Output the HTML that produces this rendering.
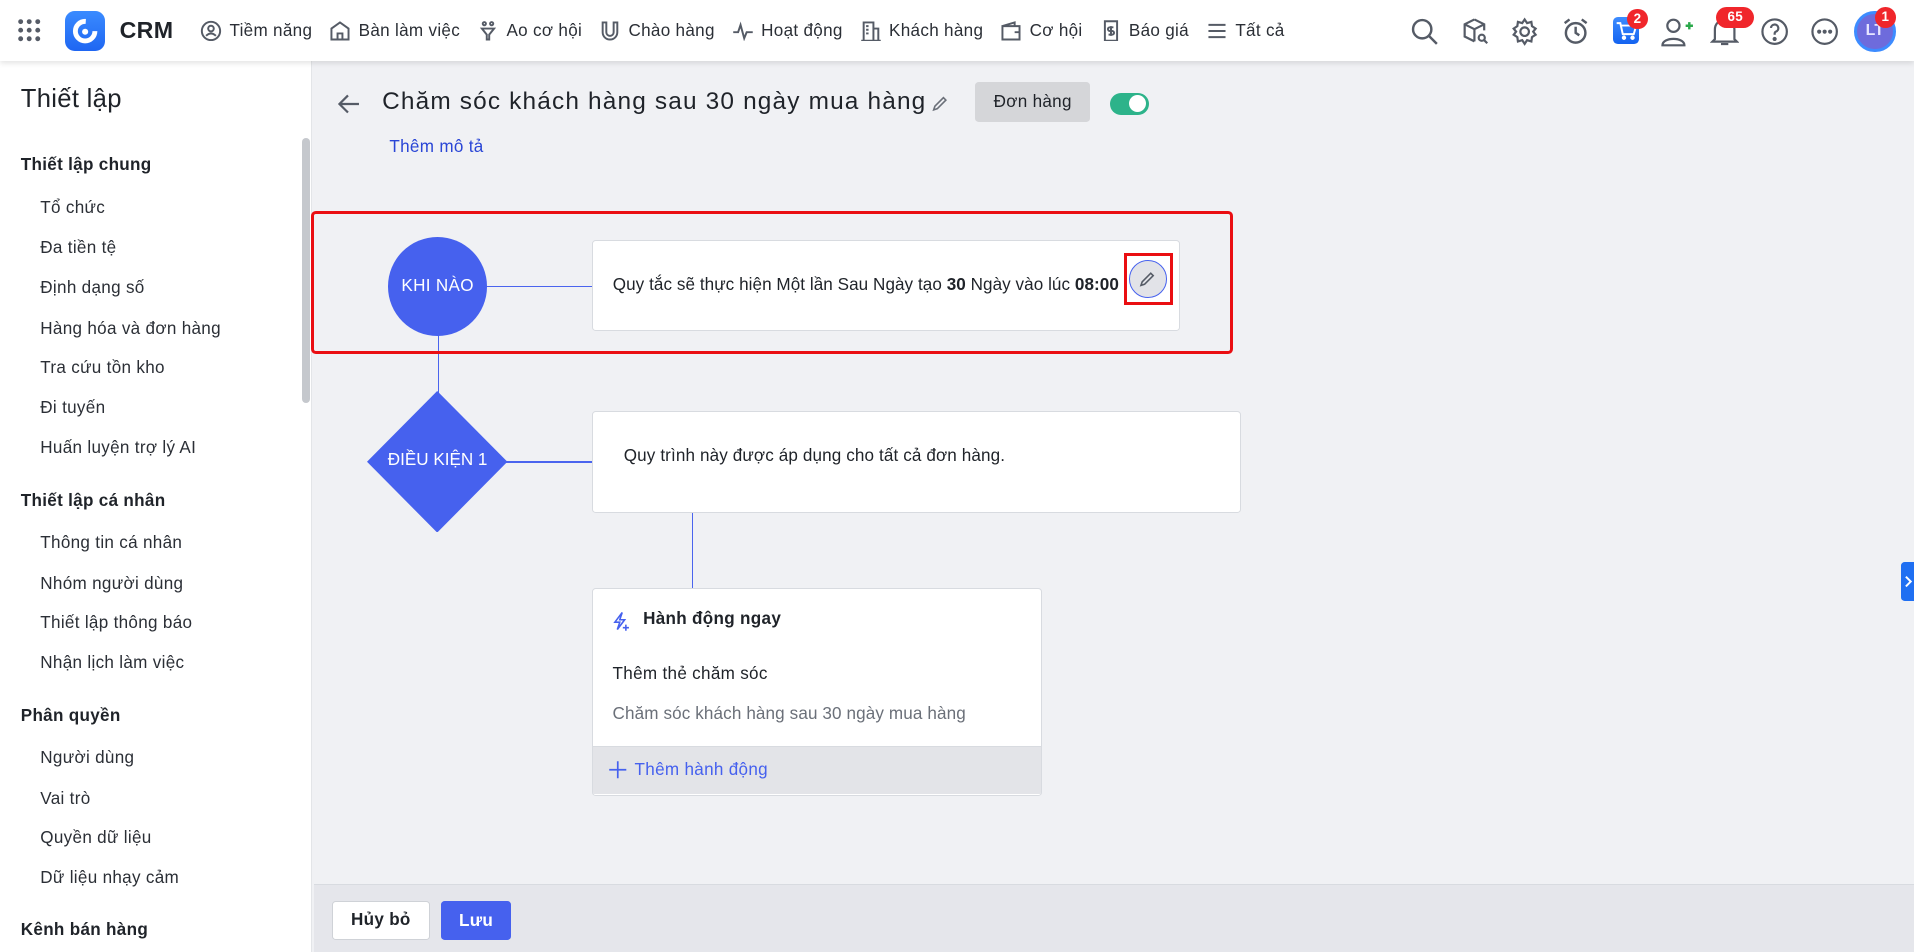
<!DOCTYPE html>
<html><head><meta charset="utf-8">
<style>
*{box-sizing:border-box;margin:0;padding:0}
html,body{width:1914px;height:952px;overflow:hidden;background:#f0f1f4}
#w{zoom:1.2207;width:1568px;height:780px;position:relative;font-family:"Liberation Sans",sans-serif;color:#1f2329;font-size:14px;overflow:hidden;letter-spacing:0.25px}
.a{position:absolute}
.top{left:0;top:0;width:1568px;height:50px;background:#fff;box-shadow:0 2px 4px rgba(0,0,0,.1);z-index:5}
.nav{top:16px;font-size:14px;color:#2b2f36;display:flex;align-items:center;white-space:nowrap}
.nav span{margin-right:14px;display:flex;align-items:center}
.nav svg{margin-right:6px}
.side{left:0;top:50px;width:256px;height:730px;background:#fff;border-right:1px solid #e3e5e8}
.side .h{position:absolute;left:17px;font-size:14px;font-weight:bold;color:#1f2329}
.side .i{position:absolute;left:33px;font-size:14px;color:#2b2f36}
.card{background:#fff;border:1px solid #d8dbe0;border-radius:3px}
.ic{stroke:#555b66;fill:none;stroke-width:1.6}
</style></head><body><div id="w">
<div class="a top">
 <svg class="a" style="left:14px;top:15px" width="20" height="20"><g fill="#555b66"><circle cx="3" cy="3" r="2"/><circle cx="10" cy="3" r="2"/><circle cx="17" cy="3" r="2"/><circle cx="3" cy="10" r="2"/><circle cx="10" cy="10" r="2"/><circle cx="17" cy="10" r="2"/><circle cx="3" cy="17" r="2"/><circle cx="10" cy="17" r="2"/><circle cx="17" cy="17" r="2"/></g></svg>
 <div class="a" style="left:53px;top:9px;width:33px;height:33px;border-radius:8px;background:linear-gradient(#3a8bff,#1f66f2)"><svg width="33" height="33"><circle cx="16.5" cy="16.5" r="8" fill="none" stroke="#fff" stroke-width="4" stroke-dasharray="38 12"/><circle cx="16.5" cy="17" r="2.5" fill="#fff"/></svg></div>
 <div class="a" style="left:98px;top:14px;font-size:19px;font-weight:bold">CRM</div>
 <div class="a nav" style="left:164px">
  <span><svg width="18" height="18" class="ic"><circle cx="9" cy="9" r="7.5"/><circle cx="9" cy="7" r="2.3"/><path d="M5 13q4-4 8 0"/></svg>Tiềm năng</span>
  <span><svg width="18" height="18" class="ic"><path d="M2 16V7l7-5 7 5v9zM7 16v-5h4v5"/></svg>Bàn làm việc</span>
  <span><svg width="18" height="18" class="ic"><circle cx="6" cy="3" r="1.3"/><circle cx="12" cy="3" r="1.3"/><path d="M4 7h10l-4 5v4H8v-4z"/></svg>Ao cơ hội</span>
  <span><svg width="18" height="18" class="ic"><path d="M3 2v8a6 6 0 0 0 12 0V2h-3v8a3 3 0 0 1-6 0V2z"/></svg>Chào hàng</span>
  <span><svg width="18" height="18" class="ic"><path d="M1 10h4l2-6 3 11 2-5h5"/></svg>Hoạt động</span>
  <span><svg width="18" height="18" class="ic"><path d="M3 17V2h8v15M11 7h4v10M1 17h16M5 5h2M5 8h2M5 11h2"/></svg>Khách hàng</span>
  <span><svg width="18" height="18" class="ic"><path d="M2 5h14v11H2zM2 5l10-3v3M12 10h4"/></svg>Cơ hội</span>
  <span><svg width="18" height="18" class="ic"><path d="M4 1h10v16H4zM9 5v8M11 6H8a1 1 0 0 0 0 3h2a1 1 0 0 1 0 3H7"/></svg>Báo giá</span>
  <span><svg width="18" height="18" class="ic"><path d="M2 4h14M2 9h14M2 14h14"/></svg>Tất cả</span>
 </div>
 <svg class="a" style="left:1155px;top:14px" width="24" height="24" fill="none" stroke="#555b66" stroke-width="2"><circle cx="10" cy="10" r="7.5"/><path d="M15.5 15.5 22 22"/></svg>
 <svg class="a" style="left:1197px;top:14px" width="24" height="24" fill="none" stroke="#555b66" stroke-width="1.8"><path d="M11 2 3 6v10l8 4M11 2l8 4v5M3 6l8 4 8-4M11 10v10"/><circle cx="17" cy="17" r="2.5"/><path d="M19 19l2.5 2.5"/></svg>
 <svg class="a" style="left:1237px;top:14px" width="24" height="24" fill="none" stroke="#555b66" stroke-width="1.8"><circle cx="12" cy="12" r="3.5"/><path d="M12 2l2 3 3.5-1 .5 3.5 3 2-2 2.5 2 2.5-3 2-.5 3.5-3.5-1-2 3-2-3-3.5 1-.5-3.5-3-2 2-2.5-2-2.5 3-2 .5-3.5 3.5 1z"/></svg>
 <svg class="a" style="left:1279px;top:14px" width="24" height="24" fill="none" stroke="#555b66" stroke-width="2"><circle cx="12" cy="13" r="8"/><path d="M12 8v5l3 2M3 5l4-3M21 5l-4-3"/></svg>
 <div class="a" style="left:1321px;top:14px;width:22px;height:22px;border-radius:4px;background:linear-gradient(#3d8cff,#1463f0)"><svg width="22" height="22" fill="none" stroke="#fff" stroke-width="1.6"><path d="M3 5h3l2 9h9l2-7H7"/><circle cx="9" cy="17" r="1" fill="#fff"/><circle cx="16" cy="17" r="1" fill="#fff"/></svg></div>
 <div class="a" style="left:1333px;top:7px;width:17px;height:17px;border-radius:50%;background:#f0262b;color:#fff;font-size:11px;font-weight:bold;text-align:center;line-height:17px">2</div>
 <svg class="a" style="left:1360px;top:13px" width="28" height="26" fill="none" stroke="#555b66" stroke-width="1.8"><circle cx="11" cy="8" r="5"/><path d="M2 24c0-7 18-7 18 0z"/><path d="M21 8h6M24 5v6" stroke="#2aa84a" stroke-width="2"/></svg>
 <svg class="a" style="left:1401px;top:13px" width="24" height="26" fill="none" stroke="#555b66" stroke-width="1.8"><path d="M4 19V11a8 8 0 0 1 16 0v8l2 2H2zM9 23h6"/></svg>
 <div class="a" style="left:1406px;top:6px;width:31px;height:17px;border-radius:9px;background:#f0262b;color:#fff;font-size:11px;font-weight:bold;text-align:center;line-height:17px">65</div>
 <svg class="a" style="left:1442px;top:14px" width="24" height="24" fill="none" stroke="#555b66" stroke-width="1.8"><circle cx="12" cy="12" r="10"/><path d="M9 9a3 3 0 1 1 4 3c-1 .5-1 1-1 2.5"/><circle cx="12" cy="18" r=".8" fill="#555b66"/></svg>
 <svg class="a" style="left:1483px;top:14px" width="24" height="24" fill="none" stroke="#555b66" stroke-width="1.8"><circle cx="12" cy="12" r="10"/><circle cx="7.5" cy="12" r=".8" fill="#555b66"/><circle cx="12" cy="12" r=".8" fill="#555b66"/><circle cx="16.5" cy="12" r=".8" fill="#555b66"/></svg>
 <div class="a" style="left:1519px;top:9px;width:34px;height:34px;border-radius:50%;border:3px solid #3d8cff;background:#6e6bdc;color:#e7e6ff;font-size:13px;font-weight:bold;text-align:center;line-height:28px">LT</div>
 <div class="a" style="left:1536px;top:6px;width:17px;height:17px;border-radius:50%;background:#f0262b;color:#fff;font-size:11px;font-weight:bold;text-align:center;line-height:17px">1</div>
</div>

<div class="a side">
 <div class="a" style="left:17px;top:20px;font-size:21px;color:#1f2329">Thiết lập</div>
 <div class="a" style="left:247px;top:63px;width:7px;height:217px;border-radius:4px;background:#c5c8cd"></div>
 <div class="h" style="top:77px">Thiết lập chung</div>
 <div class="i" style="top:112px">Tổ chức</div>
 <div class="i" style="top:145px">Đa tiền tệ</div>
 <div class="i" style="top:178px">Định dạng số</div>
 <div class="i" style="top:211px">Hàng hóa và đơn hàng</div>
 <div class="i" style="top:243px">Tra cứu tồn kho</div>
 <div class="i" style="top:276px">Đi tuyến</div>
 <div class="i" style="top:309px">Huấn luyện trợ lý AI</div>
 <div class="h" style="top:352px">Thiết lập cá nhân</div>
 <div class="i" style="top:387px">Thông tin cá nhân</div>
 <div class="i" style="top:420px">Nhóm người dùng</div>
 <div class="i" style="top:452px">Thiết lập thông báo</div>
 <div class="i" style="top:485px">Nhận lịch làm việc</div>
 <div class="h" style="top:528px">Phân quyền</div>
 <div class="i" style="top:563px">Người dùng</div>
 <div class="i" style="top:596px">Vai trò</div>
 <div class="i" style="top:628px">Quyền dữ liệu</div>
 <div class="i" style="top:661px">Dữ liệu nhạy cảm</div>
 <div class="h" style="top:704px">Kênh bán hàng</div>
</div>

<svg class="a" style="left:276px;top:76px" width="20" height="18" fill="none" stroke="#555b66" stroke-width="1.8"><path d="M18 9H2M9 2 2 9l7 7"/></svg>
<div class="a" style="left:313px;top:72px;font-size:20px;color:#1f2329;letter-spacing:0.95px">Chăm sóc khách hàng sau 30 ngày mua hàng</div>
<svg class="a" style="left:762px;top:77px" width="16" height="16" fill="none" stroke="#6b7079" stroke-width="1.3"><path d="M3 13l1-3 7-7 2 2-7 7z"/></svg>
<div class="a" style="left:799px;top:67px;width:94px;height:33px;border-radius:3px;background:#d5d6d9;text-align:center;line-height:33px;font-size:14px">Đơn hàng</div>
<div class="a" style="left:909px;top:76px;width:32px;height:18px;border-radius:9px;background:#2db38a"><div class="a" style="left:16px;top:2px;width:14px;height:14px;border-radius:50%;background:#fff"></div></div>
<div class="a" style="left:319px;top:112px;color:#2a46d6;font-size:14px">Thêm mô tả</div>

<div class="a" style="left:359px;top:234px;width:1px;height:110px;background:#4a64ee"></div>
<div class="a" style="left:360px;top:234px;width:125px;height:1px;background:#4a64ee"></div>
<div class="a" style="left:360px;top:378px;width:125px;height:1px;background:#4a64ee"></div>
<div class="a" style="left:567px;top:419px;width:1px;height:64px;background:#4a64ee"></div>

<div class="a" style="left:255px;top:173px;width:755px;height:117px;border:3px solid #ea0e12;border-radius:4px"></div>
<div class="a" style="left:318px;top:194px;width:81px;height:81px;border-radius:50%;background:#4661ee;color:#fff;text-align:center;line-height:81px;font-size:14px">KHI NÀO</div>
<div class="a card" style="left:485px;top:197px;width:482px;height:74px"></div>
<div class="a" style="left:502px;top:225px;font-size:14px;white-space:nowrap;letter-spacing:0.05px">Quy tắc sẽ thực hiện Một lần Sau Ngày tạo <b>30</b> Ngày vào lúc <b>08:00</b></div>
<div class="a" style="left:921px;top:207px;width:40px;height:43px;border:3px solid #ea0e12"></div>
<div class="a" style="left:925px;top:213px;width:31px;height:31px;border-radius:50%;border:1px solid #4661ee;background:#e2e3e8"><svg width="29" height="29" fill="none" stroke="#555b66" stroke-width="1.3"><path d="M9 20l1-3 7-7 2 2-7 7z"/></svg></div>

<svg class="a" style="left:301px;top:320px" width="115" height="116"><polygon points="57.5,0 115,58 57.5,116 0,58" fill="#4661ee"/></svg>
<div class="a" style="left:301px;top:369px;width:115px;text-align:center;color:#fff;font-size:14px;letter-spacing:0">ĐIỀU KIỆN 1</div>
<div class="a card" style="left:485px;top:337px;width:532px;height:83px"></div>
<div class="a" style="left:511px;top:365px;font-size:14px;letter-spacing:0.1px">Quy trình này được áp dụng cho tất cả đơn hàng.</div>

<div class="a card" style="left:485px;top:482px;width:369px;height:170px;overflow:hidden">
 <svg class="a" style="left:14px;top:17px" width="18" height="18" fill="none" stroke="#4661ee" stroke-width="1.3"><path d="M10 2 4 10h4l-2 6 6-8H8l2-6zM13 12v5M10.5 14.5h5"/></svg>
 <div class="a" style="left:41px;top:16px;font-size:14px;font-weight:bold">Hành động ngay</div>
 <div class="a" style="left:16px;top:61px;font-size:14px">Thêm thẻ chăm sóc</div>
 <div class="a" style="left:16px;top:94px;font-size:14px;color:#6b7079;letter-spacing:0.1px">Chăm sóc khách hàng sau 30 ngày mua hàng</div>
 <div class="a" style="left:0;top:128px;width:369px;height:40px;background:#e3e4e8;border-top:1px solid #d8dbe0"></div>
 <svg class="a" style="left:12px;top:140px" width="16" height="16" stroke="#4661ee" stroke-width="1.4"><path d="M8 1v14M1 8h14"/></svg>
 <div class="a" style="left:34px;top:140px;font-size:14px;color:#4661ee">Thêm hành động</div>
</div>

<div class="a" style="left:1557px;top:460px;width:11px;height:32px;background:#1f6ff2;border-radius:3px 0 0 3px"><svg width="11" height="32" fill="none" stroke="#fff" stroke-width="1.6"><path d="M4 12l4 4-4 4"/></svg></div>

<div class="a" style="left:257px;top:724px;width:1311px;height:56px;background:#e5e6eb;border-top:1px solid #d8dbe0"></div>
<div class="a" style="left:272px;top:738px;width:80px;height:32px;background:#fff;border:1px solid #cfd2d7;border-radius:3px;text-align:center;line-height:30px;font-weight:bold">Hủy bỏ</div>
<div class="a" style="left:361px;top:738px;width:58px;height:32px;background:#4661ee;border-radius:3px;text-align:center;line-height:32px;font-weight:bold;color:#fff">Lưu</div>
</div></body></html>
